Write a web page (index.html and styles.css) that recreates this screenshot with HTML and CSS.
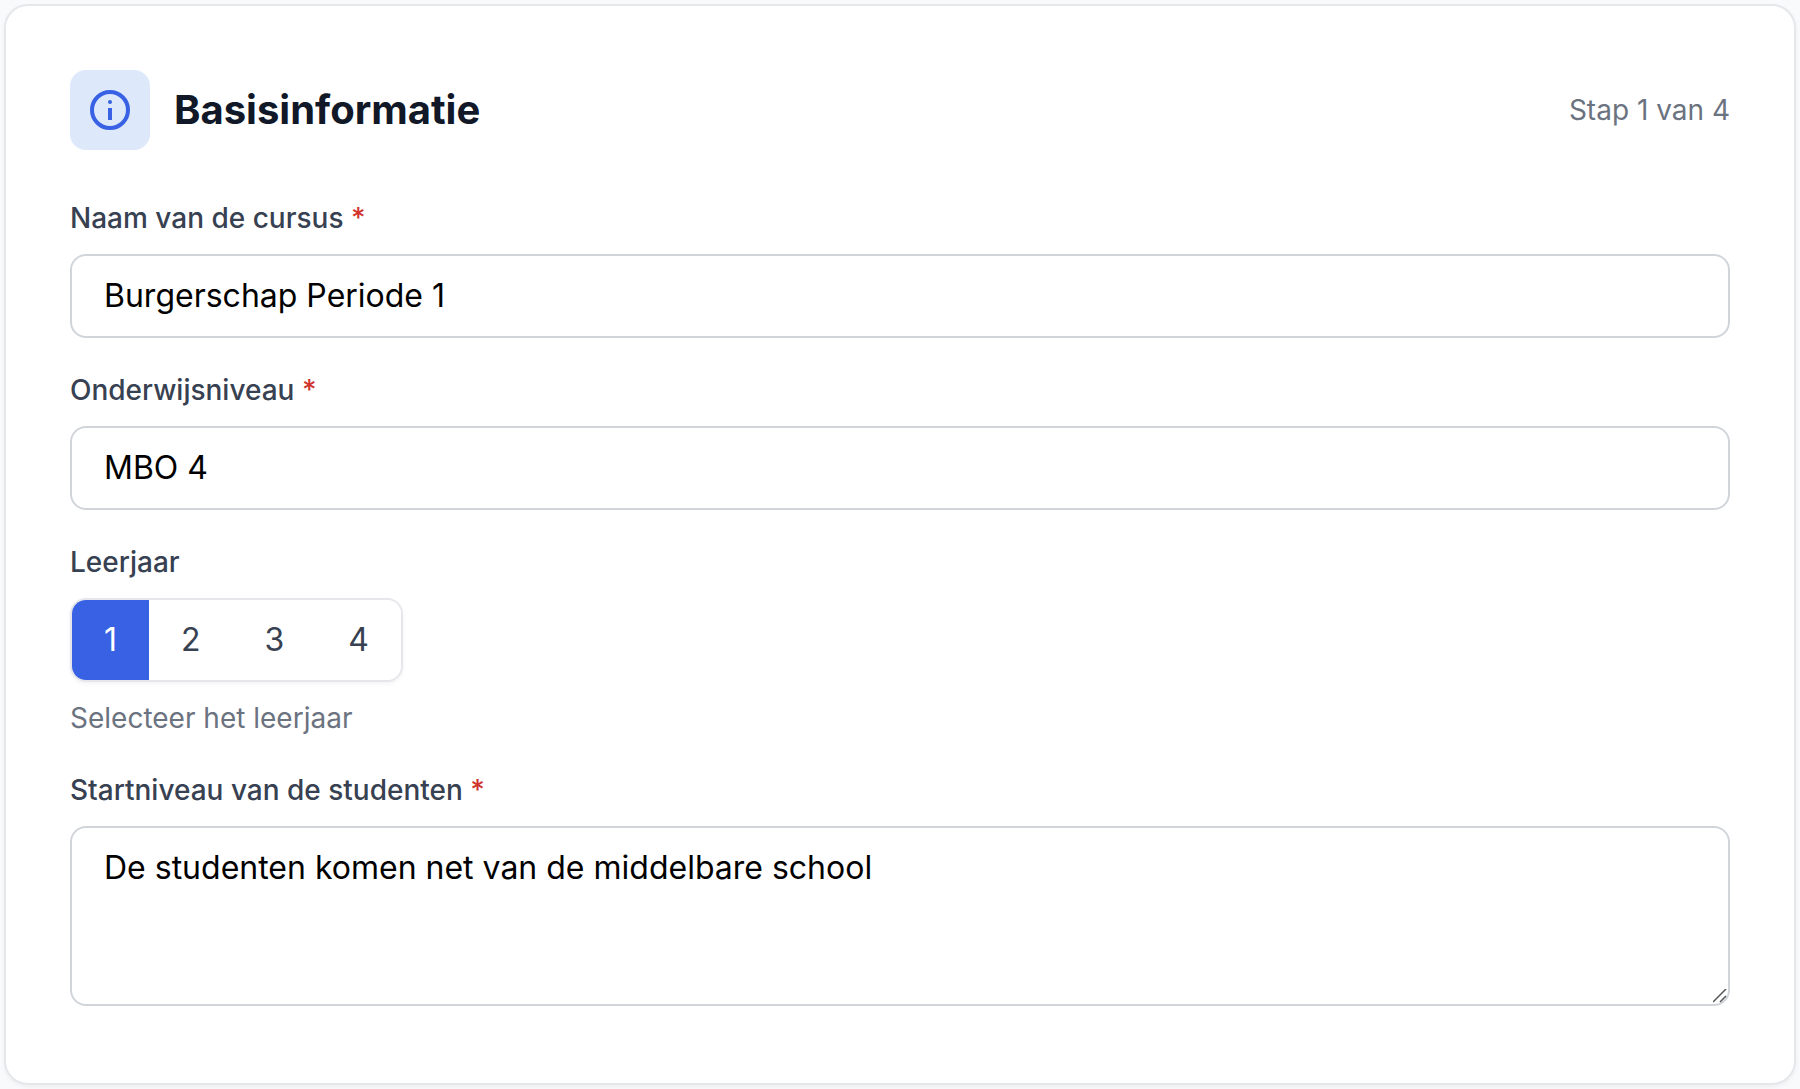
FILE: index.html
```html
<!DOCTYPE html>
<html lang="nl">

<head>
    <meta charset="UTF-8" />
    <title>Basisinformatie</title>
    <meta name="viewport" content="width=device-width, initial-scale=1.0" />
    <link rel="stylesheet" href="styles.css">
</head>

<body>

    <form class="card">
        <header class="card-header">
            <div class="icon-box">
                <svg class="icon" viewBox="0 0 40 40" fill="none" stroke="currentColor" aria-hidden="true">
                    <circle cx="20" cy="20" r="18" stroke-width="4" />
                    <circle cx="20" cy="12" r="2" fill="currentColor" stroke="none" />
                    <path d="M20 18v12" stroke-width="4" />
                </svg>
            </div>
            <h2 class="card-title">Basisinformatie</h2>
            <span class="step">Stap 1 van 4</span>
        </header>

        <div class="field">
            <label class="label" for="courseName">Naam van de cursus <span class="required">*</span></label>
            <input class="input" type="text" id="courseName" value="Burgerschap Periode 1" required />
        </div>

        <div class="field">
            <label class="label" for="level">Onderwijsniveau <span class="required">*</span></label>
            <input class="input" type="text" id="level" value="MBO 4" required />
        </div>

        <!-- Year picker -->
        <div class="field">
            <div class="label" id="yearLabel">Leerjaar</div>
            <div class="year-group" role="group" aria-labelledby="yearLabel">
                <button class="year-btn active" type="button" aria-pressed="true">1</button>
                <button class="year-btn" type="button" aria-pressed="false">2</button>
                <button class="year-btn" type="button" aria-pressed="false">3</button>
                <button class="year-btn" type="button" aria-pressed="false">4</button>
            </div>
            <p class="hint">Selecteer het leerjaar</p>
        </div>

        <div class="field">
            <label class="label" for="startLevel">Startniveau van de studenten <span class="required">*</span></label>
            <textarea class="input textarea" id="startLevel" rows="3" required>De studenten komen net van de middelbare school</textarea>
        </div>
    </form>

    <script>
        const yearButtons = document.querySelectorAll('.year-btn');

        yearButtons.forEach((btn) => {
            btn.addEventListener('click', () => {
                yearButtons.forEach((other) => {
                    other.classList.toggle('active', other === btn);
                    other.setAttribute('aria-pressed', other === btn);
                });
            });
        });
    </script>

</body>

</html>
```
FILE: styles.css
```css
* {
    box-sizing: border-box;
}

body {
    margin: 0;
    padding: 4px;
    font-family: Inter, "Liberation Sans", sans-serif;
    font-size: 32px;
    line-height: 48px;
    background: #f9fafb;
    color: #111827;
}

.card {
    padding: 64px;
    background: #fff;
    border: 2px solid #e5e7eb;
    border-radius: 24px;
    box-shadow: 0 2px 4px rgba(0, 0, 0, 0.05);
}

.card-header {
    display: flex;
    align-items: center;
    gap: 24px;
    margin-bottom: 48px;
}

.icon-box {
    display: flex;
    align-items: center;
    justify-content: center;
    width: 80px;
    height: 80px;
    border-radius: 16px;
    background: #dde8fb;
    color: #3862e3;
}

.icon {
    width: 40px;
    height: 40px;
}

.card-title {
    margin: 0;
    font-size: 40px;
    font-weight: 700;
    line-height: 56px;
}

.step {
    margin-left: auto;
    font-size: 28px;
    line-height: 40px;
    color: #6b7280;
}

.field + .field {
    margin-top: 32px;
}

.label {
    display: block;
    margin-bottom: 16px;
    font-size: 28px;
    font-weight: 500;
    line-height: 40px;
    color: #374151;
}

.required {
    color: #d0342c;
}

.input {
    display: block;
    width: 100%;
    margin: 0;
    padding: 16px 32px;
    border: 2px solid #d1d5db;
    border-radius: 16px;
    background: #fff;
    font: inherit;
    color: #000;
}

.input:focus {
    outline: 2px solid #3862e3;
}

/* textarea stays inline so it keeps its baseline gap */
.textarea {
    display: inline-block;
    resize: vertical;
}

.textarea::-webkit-scrollbar {
    width: 20px;
}

.textarea::-webkit-resizer {
    background: url("data:image/svg+xml,%3Csvg xmlns='http://www.w3.org/2000/svg' viewBox='0 0 20 20'%3E%3Cpath d='M5 18L18 5M12 18l6-6' fill='none' stroke='%23555' stroke-width='1.5'/%3E%3C/svg%3E") no-repeat right bottom / 20px 20px;
}

.year-group {
    display: flex;
    width: fit-content;
    overflow: hidden;
    background: #fff;
    border: 2px solid #e5e7eb;
    border-radius: 16px;
    box-shadow: 0 2px 4px rgba(0, 0, 0, 0.05);
}

.year-btn {
    margin: 0;
    padding: 16px 32px;
    border: none;
    background: #fff;
    font: inherit;
    color: #374151;
    cursor: pointer;
}

.year-btn.active {
    background: #3862e3;
    color: #fff;
}

.hint {
    margin: 16px 0 0;
    font-size: 28px;
    line-height: 40px;
    color: #6b7280;
}

@media (max-width: 600px) {
    .card {
        padding: 24px;
    }

    .card-header {
        flex-wrap: wrap;
    }
}
```
